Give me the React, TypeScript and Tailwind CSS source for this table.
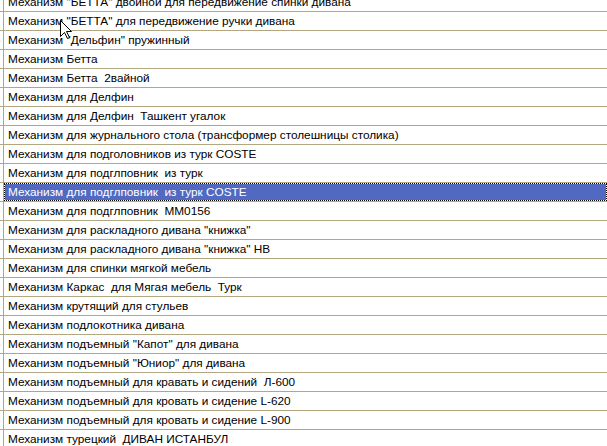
import React from "react";

const rows = [
  'Механизм "БЕТТА" двойной для передвижение спинки дивана',
  'Механизм "БЕТТА" для передвижение ручки дивана',
  'Механизм "Дельфин" пружинный',
  "Механизм Бетта",
  "Механизм Бетта  2вайной",
  "Механизм для Делфин",
  "Механизм для Делфин  Ташкент угалок",
  "Механизм для журнального стола (трансформер столешницы столика)",
  "Механизм для подголовников из турк COSTE",
  "Механизм для подглповник  из турк",
  "Механизм для подглповник  из турк COSTE",
  "Механизм для подглповник  MM0156",
  'Механизм для раскладного дивана "книжка"',
  'Механизм для раскладного дивана "книжка" HB',
  "Механизм для спинки мягкой мебель",
  "Механизм Каркас  для Мягая мебель  Турк",
  "Механизм крутящий для стульев",
  "Механизм подлокотника дивана",
  'Механизм подъемный "Капот" для дивана',
  'Механизм подъемный "Юниор" для дивана',
  "Механизм подъемный для кравать и сидений  Л-600",
  "Механизм подъемный для кровать и сидение L-620",
  "Механизм подъемный для кровать и сидение L-900",
  "Механизм турецкий  ДИВАН ИСТАНБУЛ",
];

const SELECTED = 10;

export default function App() {
  return (
    <div
      className="relative w-[607px] h-[446px] overflow-hidden bg-white text-[11.8px] text-black"
      style={{ fontFamily: '"Liberation Sans", Arial, sans-serif' }}
    >
      <div className="-mt-[7px] flex flex-col">
        {rows.map((t, i) => (
          <div key={i} className="flex h-[19px] border-b border-[#b3a781]">
            <div className="w-[3px] shrink-0" />
            <div className="flex-1 border-l border-[#b3a781] flex">
              {i === SELECTED ? (
                <div className="flex-1 bg-white border border-dotted border-black flex">
                  <div className="flex-1 bg-[#5169c1] text-white pl-[3px] pt-[1px] flex items-center whitespace-pre leading-none">
                    {t}
                  </div>
                </div>
              ) : (
                <div className="flex-1 pl-[4px] pt-[1px] flex items-center whitespace-pre leading-none">
                  {t}
                </div>
              )}
            </div>
          </div>
        ))}
      </div>
      <svg
        className="absolute left-[60px] top-[20px]"
        width="14"
        height="20"
        viewBox="0 0 14 20"
      >
        <path
          d="M0.5 0.5 L0.5 16.5 L4.5 12.5 L7.5 18.5 L9.5 17.5 L6.5 11.5 L11.5 11.5 Z"
          fill="#fff"
          stroke="#000"
          strokeWidth="1"
        />
      </svg>
    </div>
  );
}
